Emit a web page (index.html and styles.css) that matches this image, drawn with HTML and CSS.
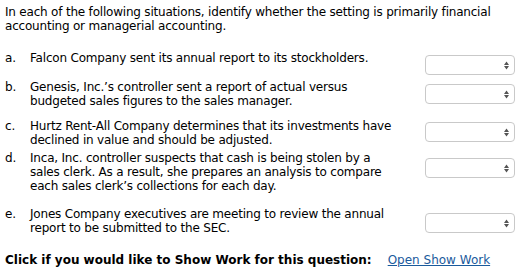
FILE: index.html
```html
<!DOCTYPE html>
<html>
<head>
<meta charset="utf-8">
<link rel="stylesheet" href="styles.css">
</head>
<body>
<div class="page">
  <p class="intro">In each of the following situations, identify whether the setting is primarily financial<br>accounting or managerial accounting.</p>
  <ol class="items">
    <li class="item item-a">
      <span class="letter">a.</span>
      <span class="text">Falcon Company sent its annual report to its stockholders.</span>
      <div class="select"><svg width="5" height="9" viewBox="0 0 5 9"><path d="M2.5 0.5 L5 4 L0 4 Z M0 5 L5 5 L2.5 8.5 Z" fill="#555"/></svg></div>
    </li>
    <li class="item item-b">
      <span class="letter">b.</span>
      <span class="text">Genesis, Inc.’s controller sent a report of actual versus<br>budgeted sales figures to the sales manager.</span>
      <div class="select"><svg width="5" height="9" viewBox="0 0 5 9"><path d="M2.5 0.5 L5 4 L0 4 Z M0 5 L5 5 L2.5 8.5 Z" fill="#555"/></svg></div>
    </li>
    <li class="item item-c">
      <span class="letter">c.</span>
      <span class="text">Hurtz Rent-All Company determines that its investments have<br>declined in value and should be adjusted.</span>
      <div class="select"><svg width="5" height="9" viewBox="0 0 5 9"><path d="M2.5 0.5 L5 4 L0 4 Z M0 5 L5 5 L2.5 8.5 Z" fill="#555"/></svg></div>
    </li>
    <li class="item item-d">
      <span class="letter">d.</span>
      <span class="text">Inca, Inc. controller suspects that cash is being stolen by a<br>sales clerk. As a result, she prepares an analysis to compare<br>each sales clerk’s collections for each day.</span>
      <div class="select"><svg width="5" height="9" viewBox="0 0 5 9"><path d="M2.5 0.5 L5 4 L0 4 Z M0 5 L5 5 L2.5 8.5 Z" fill="#555"/></svg></div>
    </li>
    <li class="item item-e">
      <span class="letter">e.</span>
      <span class="text">Jones Company executives are meeting to review the annual<br>report to be submitted to the SEC.</span>
      <div class="select"><svg width="5" height="9" viewBox="0 0 5 9"><path d="M2.5 0.5 L5 4 L0 4 Z M0 5 L5 5 L2.5 8.5 Z" fill="#555"/></svg></div>
    </li>
  </ol>
  <p class="showwork"><span class="sw-label">Click if you would like to Show Work for this question:</span><a class="sw-link" href="#">Open Show Work</a></p>
</div>
</body>
</html>
```

FILE: styles.css
```css
html, body {
  margin: 0;
  padding: 0;
  background: #fff;
}
body {
  font-family: "DejaVu Sans", Verdana, sans-serif;
  font-size: 12px;
  line-height: 14px;
  letter-spacing: -0.2px;
  color: #000;
}
.page {
  padding: 5px 0 0 5px;
}
.intro {
  margin: 0;
  white-space: nowrap;
}
.items {
  list-style: none;
  margin: 18px 0 0 0;
  padding: 0;
}
.item {
  display: flex;
  align-items: flex-start;
  width: 510px;
}
.letter {
  width: 25px;
  flex: none;
}
.text {
  flex: 1;
  white-space: nowrap;
}
.select {
  flex: none;
  box-sizing: border-box;
  width: 90px;
  height: 20px;
  border: 1px solid #c9c9c9;
  border-radius: 4px;
  background: #fff;
  display: flex;
  align-items: center;
  justify-content: flex-end;
  padding-right: 5px;
}
.item-a .select { margin-top: 4px; }
.item-b { margin-top: 5px; }
.item-b .select { margin-top: 4px; }
.item-c { margin-top: 11px; }
.item-c .select { margin-top: 3px; }
.item-d { margin-top: 4px; }
.item-d .select { margin-top: 7px; }
.item-e { margin-top: 14px; }
.item-e .select { margin-top: 6px; }
.showwork {
  margin: 18px 0 0 0;
  white-space: nowrap;
}
.sw-label {
  font-weight: bold;
  letter-spacing: 0;
}
.sw-link {
  margin-left: 16px;
  color: #1a5a9c;
  letter-spacing: 0;
  text-decoration: underline;
}
```
